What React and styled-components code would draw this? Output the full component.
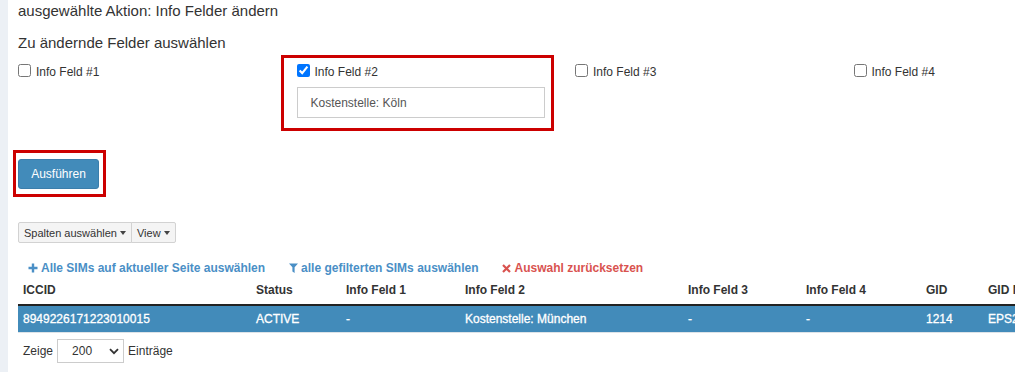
import React from "react";
import styled, { createGlobalStyle } from "styled-components";

const Global = createGlobalStyle`
  html, body { margin: 0; padding: 0; background: #fff; overflow: hidden; }
  body { font-family: "Liberation Sans", Arial, sans-serif; color: #333; }
`;

const Shell = styled.div`
  display: flex;
  min-height: 372px;
  width: 1300px;
`;

const Strip = styled.div`
  width: 8px;
  flex: none;
  background: #ecf0f5;
`;

const Main = styled.div`
  flex: 1;
  padding: 0 0 0 10px;
`;

const Title = styled.h3`
  margin: 0;
  font-size: 15px;
  font-weight: 400;
  line-height: 21px;
  color: #333;
`;

const SubTitle = styled(Title)`
  margin-top: 11px;
`;

const FieldGrid = styled.div`
  display: grid;
  grid-template-columns: repeat(4, 278.5px);
  margin-top: 9px;
`;

const FieldCol = styled.div`
  position: relative;
  padding-right: 30px;
`;

const Frame = styled.div`
  position: absolute;
  border: 3px solid #cc0000;
  pointer-events: none;
  left: ${(p) => p.$l}px;
  right: ${(p) => p.$r}px;
  top: ${(p) => p.$t}px;
  bottom: ${(p) => p.$b}px;
`;

const CheckLabel = styled.label`
  display: flex;
  align-items: center;
  height: 17px;
  font-size: 12px;
  color: #333;
  gap: 5px;
  input {
    margin: 0 0 0 0;
    width: 13px;
    height: 13px;
  }
`;

const LabelText = styled.span`
  padding-top: 2px;
`;

const TextInput = styled.div`
  margin-top: 8px;
  height: 31px;
  box-sizing: border-box;
  border: 1px solid #ccc;
  display: flex;
  align-items: center;
  padding-left: 13px;
  font-size: 12px;
  color: #555;
`;

const ButtonWrap = styled.div`
  position: relative;
  display: inline-block;
  margin-top: 41px;
`;

const PrimaryButton = styled.button`
  display: block;
  width: 81px;
  height: 30px;
  background: #428bba;
  border: 1px solid #3b7eab;
  border-radius: 3px;
  color: #fff;
  font-family: "Liberation Sans", Arial, sans-serif;
  font-size: 12px;
  padding: 0;
`;

const BtnGroup = styled.div`
  display: flex;
  margin-top: 33px;
`;

const SmallBtn = styled.button`
  height: 21px;
  box-sizing: border-box;
  background: #f4f4f4;
  border: 1px solid #d2d2d2;
  margin-left: ${(p) => (p.$first ? 0 : -1)}px;
  border-radius: ${(p) => (p.$first ? "2px 0 0 2px" : "0 2px 2px 0")};
  padding: 0 5px 0 5px;
  font-family: "Liberation Sans", Arial, sans-serif;
  font-size: 11px;
  color: #333;
  display: flex;
  align-items: center;
  gap: 3px;
`;

const Caret = styled.span`
  width: 0;
  height: 0;
  border-left: 3.5px solid transparent;
  border-right: 3.5px solid transparent;
  border-top: 4px solid #444;
`;

const LinkRow = styled.div`
  display: flex;
  gap: 24px;
  margin-top: 16px;
  padding-left: 10px;
  height: 18px;
  align-items: center;
`;

const ActionLink = styled.a`
  display: flex;
  align-items: center;
  gap: 3px;
  font-size: 12px;
  font-weight: 700;
  color: ${(p) => (p.$danger ? "#d9534f" : "#4a8fc6")};
  text-decoration: none;
  line-height: 18px;
`;

const Table = styled.table`
  border-collapse: collapse;
  table-layout: fixed;
  width: 1200px;
  font-size: 12px;
`;

const Th = styled.th`
  text-align: left;
  font-weight: 700;
  color: #333;
  padding: 4px 5px 5px;
  line-height: 18px;
  border-bottom: 2px solid #222;
  white-space: nowrap;
  overflow: hidden;
`;

const SelectedRow = styled.tr`
  background: #428bba;
  border-bottom: 1px solid #dde3e8;
`;

const Td = styled.td`
  color: #fff;
  font-weight: 400;
  -webkit-text-stroke: 0.3px #fff;
  padding: 4px 5px;
  line-height: 18px;
  white-space: nowrap;
  overflow: hidden;
`;

const LengthRow = styled.div`
  display: flex;
  align-items: center;
  gap: 4px;
  margin-top: 6px;
  padding-left: 5px;
  font-size: 12px;
  color: #333;
`;

const FakeSelect = styled.div`
  width: 67px;
  height: 24px;
  box-sizing: border-box;
  border: 1px solid #ccc;
  display: flex;
  align-items: center;
  justify-content: space-between;
  padding: 0 4px 0 14px;
  font-size: 12px;
  color: #333;
`;

const columns = [
  { label: "ICCID", w: 233, v: "8949226171223010015" },
  { label: "Status", w: 90, v: "ACTIVE" },
  { label: "Info Feld 1", w: 119, v: "-" },
  { label: "Info Feld 2", w: 223, v: "Kostenstelle: München" },
  { label: "Info Feld 3", w: 118, v: "-" },
  { label: "Info Feld 4", w: 120, v: "-" },
  { label: "GID", w: 62, v: "1214" },
  { label: "GID Name", w: 235, v: "EPS2 Gruppe" },
];

const PlusIcon = () => (
  <svg width="10" height="10" viewBox="0 0 10 10">
    <path d="M5 0.5v9M0.5 5h9" stroke="#4a8fc6" strokeWidth="2.4" />
  </svg>
);

const FilterIcon = () => (
  <svg width="9" height="10" viewBox="0 0 9 10">
    <path d="M0 0.5h9L5.6 4.3V10L3.4 8.6V4.3z" fill="#4a8fc6" />
  </svg>
);

const XIcon = () => (
  <svg width="9" height="9" viewBox="0 0 9 9">
    <path d="M1 1l7 7M8 1l-7 7" stroke="#d9534f" strokeWidth="2.2" />
  </svg>
);

const Chevron = () => (
  <svg width="10" height="7" viewBox="0 0 10 7">
    <path d="M1 1.2l4 4 4-4" stroke="#333" strokeWidth="1.8" fill="none" />
  </svg>
);

const fields = [1, 2, 3, 4];

export default function App() {
  return (
    <>
      <Global />
      <Shell>
        <Strip />
        <Main>
          <Title>ausgewählte Aktion: Info Felder ändern</Title>
          <SubTitle>Zu ändernde Felder auswählen</SubTitle>
          <FieldGrid>
            {fields.map((n) => (
              <FieldCol key={n}>
                {n === 2 && <Frame $l={-16} $r={21} $t={-7} $b={-13} />}
                <CheckLabel>
                  <input type="checkbox" defaultChecked={n === 2} />
                  <LabelText>Info Feld #{n}</LabelText>
                </CheckLabel>
                {n === 2 && <TextInput>Kostenstelle: Köln</TextInput>}
              </FieldCol>
            ))}
          </FieldGrid>

          <ButtonWrap>
            <Frame $l={-5} $r={-7} $t={-9} $b={-8} />
            <PrimaryButton>Ausführen</PrimaryButton>
          </ButtonWrap>

          <BtnGroup>
            <SmallBtn $first>
              Spalten auswählen <Caret />
            </SmallBtn>
            <SmallBtn>
              View <Caret />
            </SmallBtn>
          </BtnGroup>

          <LinkRow>
            <ActionLink href="#">
              <PlusIcon /> Alle SIMs auf aktueller Seite auswählen
            </ActionLink>
            <ActionLink href="#">
              <FilterIcon /> alle gefilterten SIMs auswählen
            </ActionLink>
            <ActionLink href="#" $danger>
              <XIcon /> Auswahl zurücksetzen
            </ActionLink>
          </LinkRow>

          <Table>
            <colgroup>
              {columns.map((c) => (
                <col key={c.label} style={{ width: c.w }} />
              ))}
            </colgroup>
            <thead>
              <tr>
                {columns.map((c) => (
                  <Th key={c.label}>{c.label}</Th>
                ))}
              </tr>
            </thead>
            <tbody>
              <SelectedRow>
                {columns.map((c) => (
                  <Td key={c.label}>{c.v}</Td>
                ))}
              </SelectedRow>
            </tbody>
          </Table>

          <LengthRow>
            Zeige
            <FakeSelect>
              200 <Chevron />
            </FakeSelect>
            Einträge
          </LengthRow>
        </Main>
      </Shell>
    </>
  );
}
